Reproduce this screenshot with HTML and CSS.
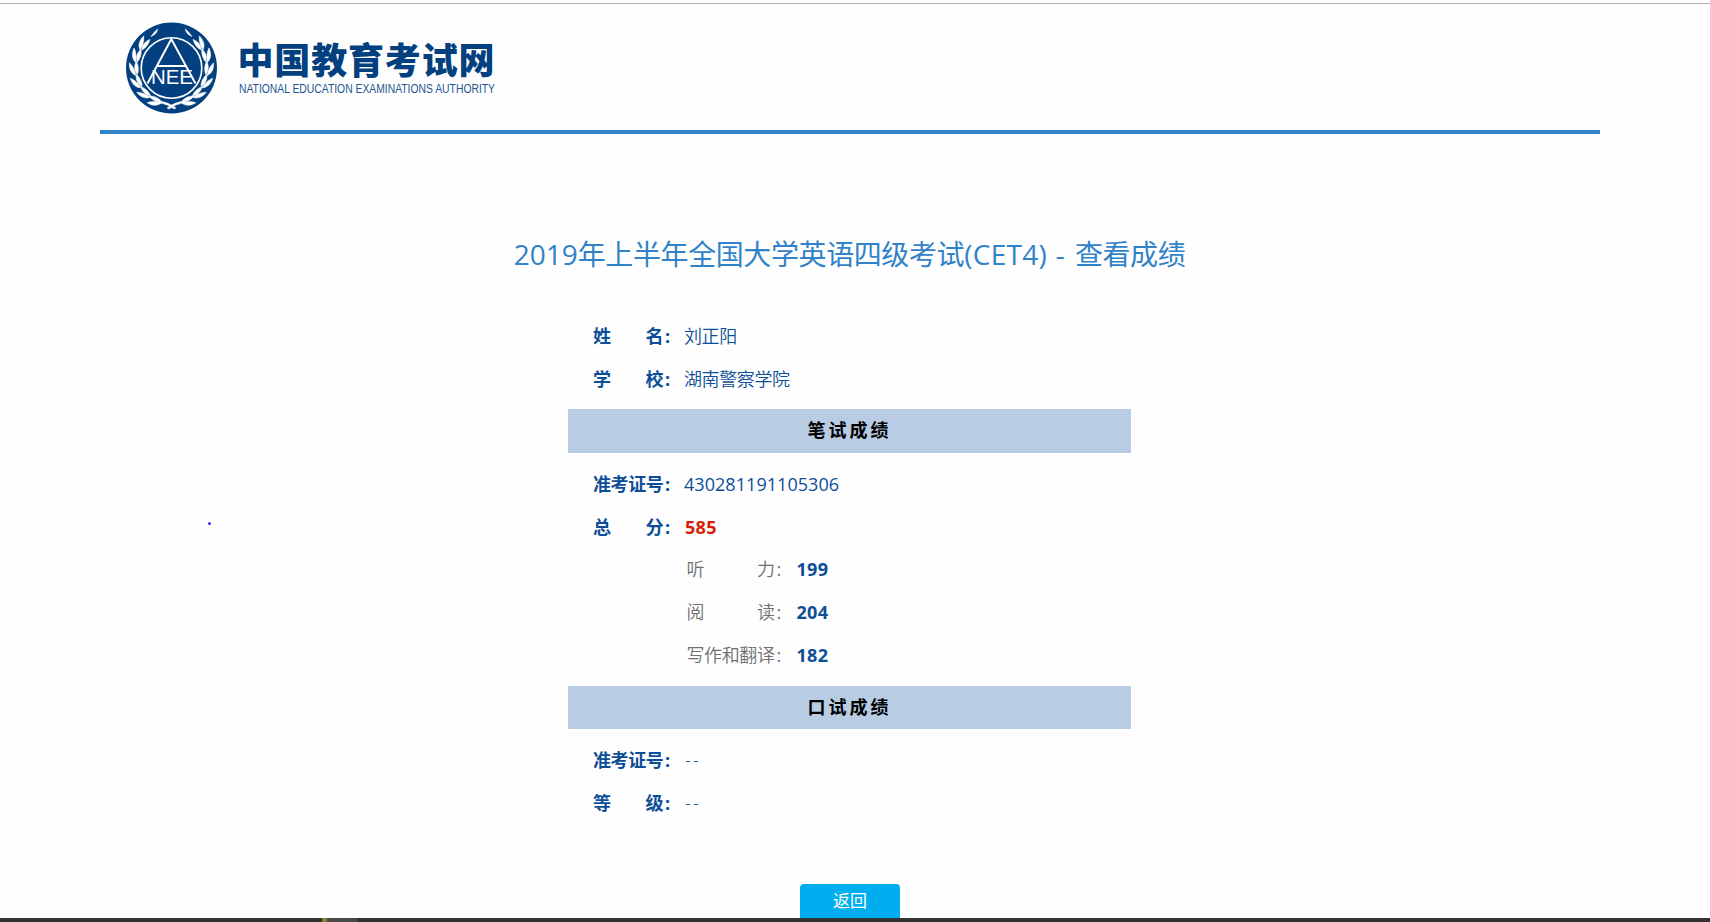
FILE: index.html
```html
<!DOCTYPE html>
<html lang="zh-CN">
<head>
<meta charset="utf-8">
<title>查看成绩</title>
<link rel="stylesheet" href="styles.css">
</head>
<body>
<div class="page">
  <header class="header">
    <svg class="logo" width="380" height="94" viewBox="122 21 380 94" role="img">
      <defs>
        <g id="pair">
          <path d="M-7 -35.5C-5 -40.5 0 -42.5 6 -42C3 -39 -1 -36.5 -7 -35.5Z"/>
          <path d="M-6 -34.2C-2 -37.5 3 -37.5 7.500 -35C3 -32.800 -2 -32.500 -6 -34.200Z"/>
        </g>
        <g id="branch">
          <path d="M0 0Q5 -2.800 9.500 -3.500Q6 .8 0 0Z" transform="translate(-20.500 -31.500) rotate(-28)"/>
          <use href="#pair" transform="rotate(-49)"/>
          <use href="#pair" transform="rotate(-70)"/>
          <use href="#pair" transform="rotate(-91)"/>
          <use href="#pair" transform="rotate(-112)"/>
          <use href="#pair" transform="rotate(-133)"/>
          <use href="#pair" transform="rotate(-153)"/>
          <path d="M-13 33Q-3 34 4.500 40L2.500 41Q-4 36 -13 34.500Z"/>
        </g>
      </defs>
      <circle class="navy" cx="171.500" cy="68" r="45.500"/>
      <g class="white" transform="translate(171.500 68)">
        <use href="#branch"/>
        <use href="#branch" transform="scale(-1 1)"/>
      </g>
      <circle class="ring" cx="171.500" cy="68" r="30.300"/>
      <path class="line" d="M147.500 83.500L171.300 39L195.500 83.500M156.500 66H186.500"/>
      <text class="mark" x="151" y="84" textLength="42" lengthAdjust="spacingAndGlyphs">NEE</text>
      <text class="name" x="237.500" y="73.500" textLength="257" lengthAdjust="spacing">中国教育考试网</text>
      <text class="sub" x="239" y="93" textLength="256" lengthAdjust="spacingAndGlyphs">NATIONAL EDUCATION EXAMINATIONS AUTHORITY</text>
    </svg>
  </header>
  <main class="result">
    <h1 class="title"><span class="year">2019</span>年上半年全国大学英语四级考试<span class="code">(CET4)<span class="sep"> - </span></span>查看成绩</h1>
    <div class="row"><span class="label"><i>姓</i><i>名</i></span><b class="colon">:</b><span class="value">刘正阳</span></div>
    <div class="row"><span class="label"><i>学</i><i>校</i></span><b class="colon">:</b><span class="value">湖南警察学院</span></div>
    <h2 class="band">笔试成绩</h2>
    <div class="row"><span class="label">准考证号</span><b class="colon">:</b><span class="value num">430281191105306</span></div>
    <div class="row sum"><span class="label"><i>总</i><i>分</i></span><b class="colon">:</b><span class="value num total">585</span></div>
    <div class="row part"><span class="label"><i>听</i><i>力</i></span><span class="colon">:</span><span class="value num">199</span></div>
    <div class="row part"><span class="label"><i>阅</i><i>读</i></span><span class="colon">:</span><span class="value num">204</span></div>
    <div class="row part"><span class="label">写作和翻译</span><span class="colon">:</span><span class="value num">182</span></div>
    <h2 class="band oral">口试成绩</h2>
    <div class="row"><span class="label">准考证号</span><b class="colon">:</b><span class="value dash">--</span></div>
    <div class="row"><span class="label"><i>等</i><i>级</i></span><b class="colon">:</b><span class="value dash">--</span></div>
    <button class="back">返回</button>
  </main>
</div>
<div class="dot"></div>
<div class="taskbar"><span class="accent"></span><span class="task"></span></div>
</body>
</html>
```
FILE: styles.css
```css
* { box-sizing: border-box; }
body {
  margin: 0;
  height: 922px;
  overflow: hidden;
  background: #fefefe;
  font-family: "Open Sans", "Noto Sans CJK SC", sans-serif;
  color: #0d4e98;
  padding-top: 3px;
}
.page { height: 915px; border-top: 1px solid #b0b0b0; overflow: hidden; }
.header {
  width: 1500px;
  height: 130px;
  margin-left: 100px;
  border-bottom: 4px solid #3182c8;
  padding: 17px 0 0 22px;
}
.logo { display: block; overflow: visible; }
.navy { fill: #03407f; }
.white { fill: #fff; stroke: #fff; stroke-width: .5; }
.ring { fill: #03407f; stroke: #fff; stroke-width: 1.6; }
.line { fill: none; stroke: #fff; stroke-width: 2; }
.mark { fill: #fff; font: 20px "Liberation Sans", sans-serif; }
.name { fill: #03407f; font: 900 36px "Noto Sans CJK SC", sans-serif; }
.sub { fill: #1d5590; font: 12.5px "Liberation Sans", sans-serif; }
.result { width: 563px; margin-left: 568px; }
.title {
  margin: 98px -60px 39px;
  height: 44px;
  line-height: 44px;
  text-align: center;
  white-space: pre;
  font-weight: 400;
  font-size: 28px;
  letter-spacing: -.4px;
  color: #3182c8;
}
.year { letter-spacing: 0; }
.code { letter-spacing: .3px; }
.sep { letter-spacing: 1.4px; }
.row { display: flex; height: 43px; line-height: 43px; padding-left: 25px; font-size: 18px; letter-spacing: -.4px; }
.label { width: 70px; display: flex; justify-content: space-between; font-weight: 700; white-space: nowrap; }
.label i { font-style: normal; }
.colon { width: 21px; padding-left: 2px; }
.value { font-weight: 350; }
.num { letter-spacing: .05px; font-weight: 400; }
.total { color: #d81e06; font-weight: 700; letter-spacing: .3px; padding-left: 1px; }
.sum { height: 42px; }
.part { padding-left: 118.5px; }
.part .label { width: 88px; font-weight: 350; color: #707070; }
.part .colon { width: 22px; color: #707070; }
.part .num { font-weight: 700; letter-spacing: .3px; }
.dash { letter-spacing: 2.2px; padding-left: 1px; }
.band {
  margin: 8px 0 10px;
  height: 44px;
  line-height: 43px;
  text-align: center;
  background: #b8cce4;
  color: #000;
  font-size: 18px;
  font-weight: 700;
  letter-spacing: 3px;
}
.oral { height: 43px; margin-top: 9px; }
.back {
  display: block;
  width: 100px;
  height: 40px;
  margin: 59px auto 0 232px;
  border: 0;
  border-radius: 4px;
  background: #00aeef;
  color: #fff;
  font: 17px/30px "Noto Sans CJK SC", sans-serif;
  padding: 0 0 8px;
}
.dot { position: absolute; left: 208px; top: 522px; width: 3px; height: 3px; border-radius: 50%; background: #3b2bea; }
.taskbar { display: flex; height: 4px; background: #343233; padding-left: 322px; }
.accent { width: 5px; background: #85802d; }
.task { width: 30px; background: #4b4a4b; }
```
